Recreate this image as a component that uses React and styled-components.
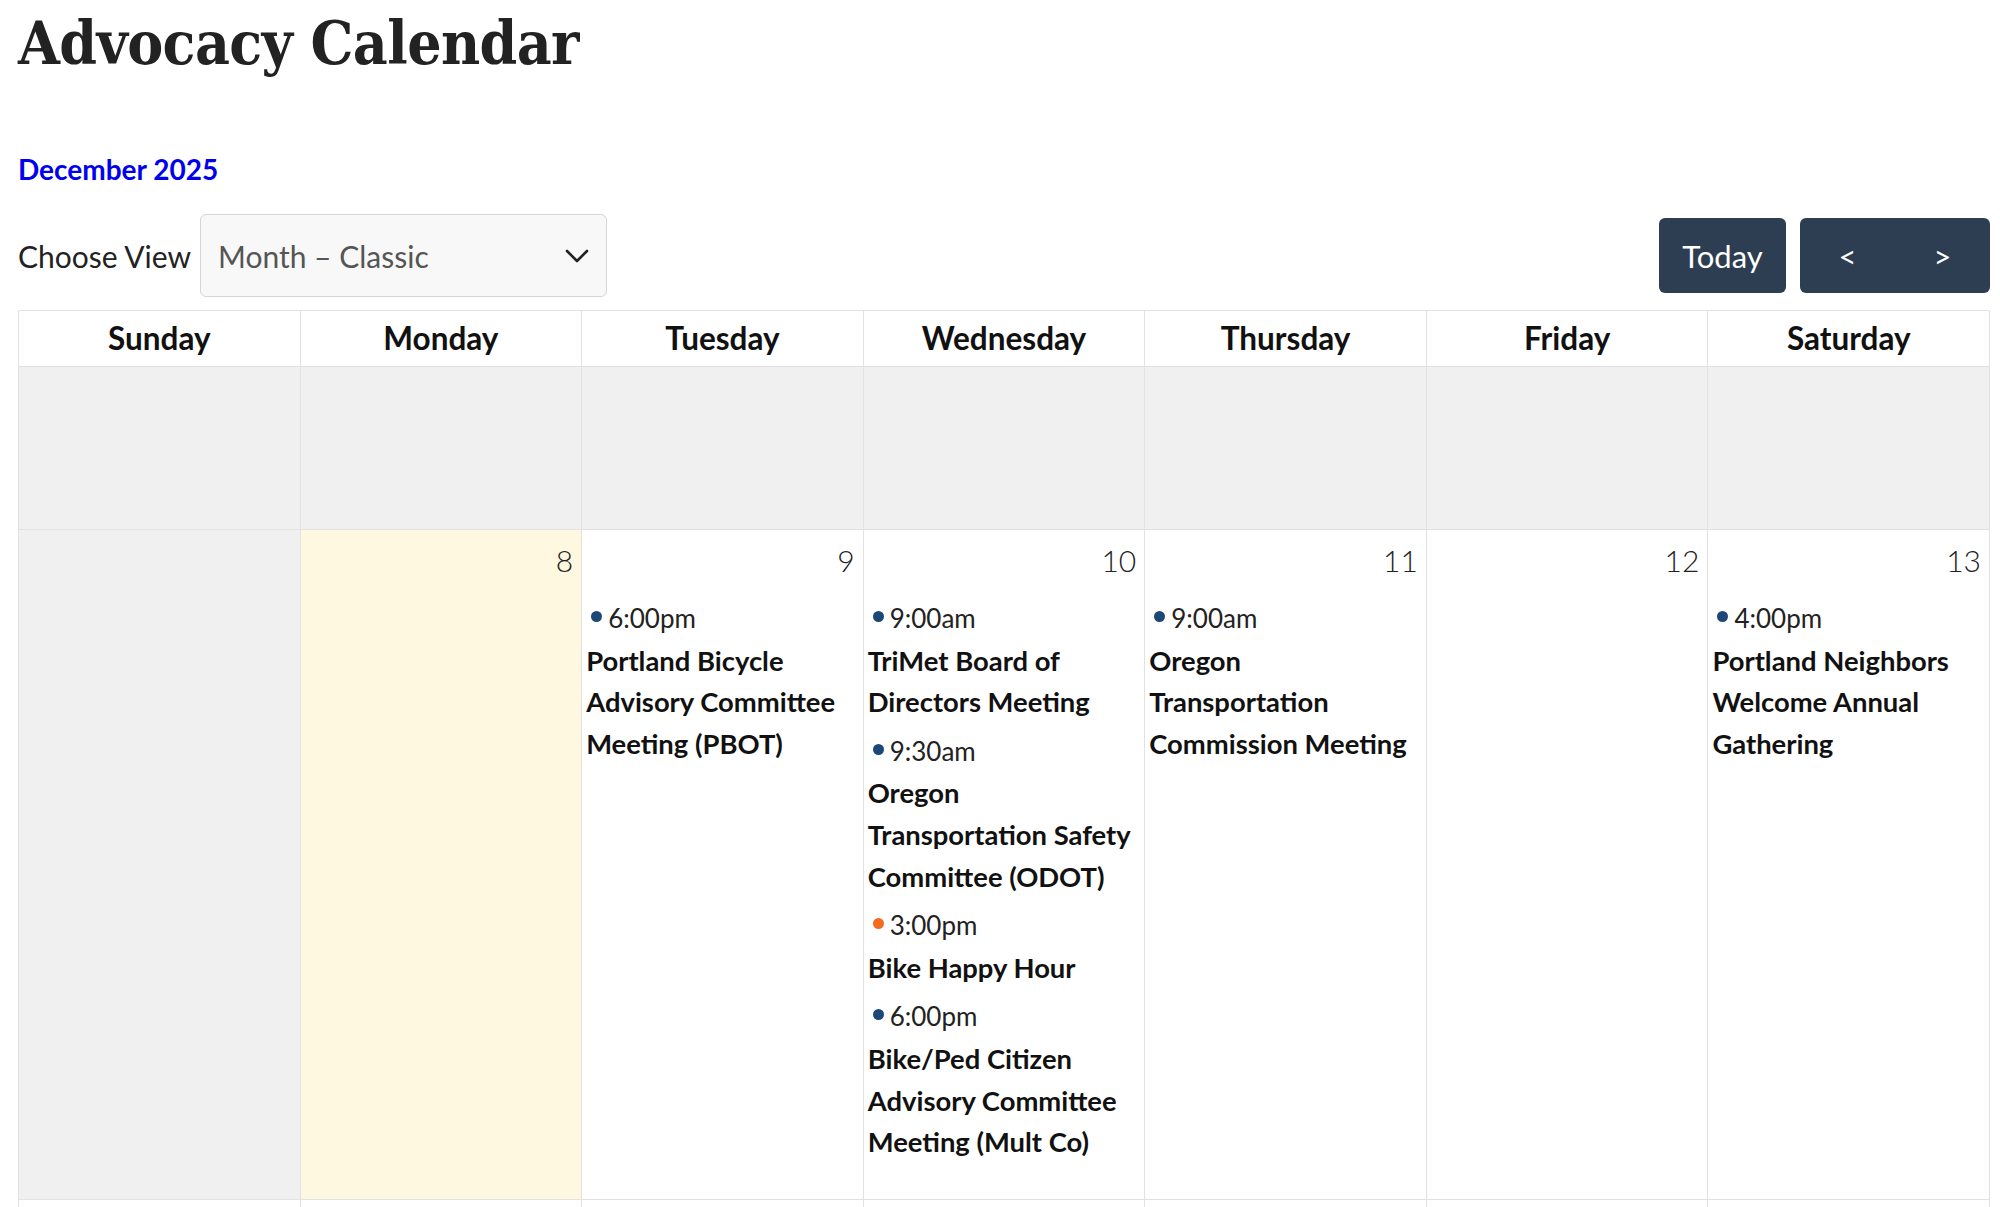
import React from "react";
import styled, { createGlobalStyle } from "styled-components";

const GlobalStyle = createGlobalStyle`
  body {
    margin: 0;
    background: #fff;
    font-family: Lato, "Noto Sans", sans-serif;
    color: #111;
  }
`;

const Page = styled.div`
  padding: 9px 10px 0 18px;
`;

const Title = styled.h1`
  margin: 0;
  font-family: "DejaVu Serif Condensed", "DejaVu Serif", serif;
  font-weight: 700;
  font-size: 60px;
  line-height: 69px;
  color: #222;
  letter-spacing: -0.6px;
`;

const MonthLabel = styled.h2`
  margin: 75px 0 0;
  font-size: 28px;
  line-height: 32px;
  font-weight: 700;
  color: #0000ee;
`;

const Controls = styled.div`
  display: flex;
  align-items: center;
  justify-content: space-between;
  margin: 29px 0 13px;
`;

const ViewPicker = styled.div`
  display: flex;
  align-items: center;
  gap: 9px;
`;

const Label = styled.span`
  font-size: 30px;
  color: #222;
`;

const Select = styled.div`
  width: 407px;
  height: 83px;
  box-sizing: border-box;
  display: flex;
  align-items: center;
  justify-content: space-between;
  padding: 0 17px;
  background: #f8f8f8;
  border: 1px solid #d6d6d6;
  border-radius: 6px;
  font-size: 30px;
  color: #555;
`;

const NavGroup = styled.div`
  display: flex;
  gap: 14px;
`;

const NavButton = styled.button`
  height: 75px;
  width: ${(p) => p.$w}px;
  display: flex;
  align-items: center;
  justify-content: space-around;
  padding: 0;
  border: none;
  border-radius: 6px;
  background: #2e3e52;
  color: #fff;
  font-family: inherit;
  font-size: 31px;
`;

const Grid = styled.div`
  display: grid;
  grid-template-columns: repeat(7, 1fr);
  border-top: 1px solid #e2e2e2;
  border-left: 1px solid #e2e2e2;
`;

const HeadCell = styled.div`
  height: 55px;
  border-right: 1px solid #e2e2e2;
  border-bottom: 1px solid #e2e2e2;
  text-align: center;
  font-size: 31.5px;
  font-weight: 700;
  line-height: 55px;
  color: #111;
`;

const DayCell = styled.div`
  min-height: ${(p) => p.$h}px;
  box-sizing: border-box;
  border-right: 1px solid #e2e2e2;
  border-bottom: 1px solid #e2e2e2;
  padding: 9px 4px 28px 4px;
  background: ${(p) => (p.$today ? "#fef8e0" : p.$muted ? "#f0f0f0" : "#fff")};
`;

const DayNum = styled.div`
  text-align: right;
  padding-right: 4px;
  font-size: 30px;
  font-weight: 300;
  line-height: 42px;
  color: #222;
`;

const EventList = styled.div`
  margin-top: 17px;
  display: flex;
  flex-direction: column;
  gap: 8px;
`;

const Event = styled.div`
  font-size: 26px;
  line-height: 41.6px;
`;

const Time = styled.div`
  display: flex;
  align-items: center;
  padding-left: 5px;
  color: #222;
`;

const Dot = styled.span`
  width: 11px;
  height: 11px;
  border-radius: 50%;
  margin-right: 6px;
  margin-top: -5px;
  background: ${(p) => (p.$orange ? "#f26b1f" : "#1d4777")};
`;

const EventTitle = styled.div`
  font-size: 27.4px;
  font-weight: 700;
  color: #111;
`;

const Chevron = () => (
  <svg width="24" height="16" viewBox="0 0 24 16">
    <path d="M2 3 L12 13 L22 3" fill="none" stroke="#222" strokeWidth="2.6" strokeLinecap="round" strokeLinejoin="round" />
  </svg>
);

const days = ["Sunday", "Monday", "Tuesday", "Wednesday", "Thursday", "Friday", "Saturday"];

const events = {
  9: [{ time: "6:00pm", title: "Portland Bicycle Advisory Committee Meeting (PBOT)" }],
  10: [
    { time: "9:00am", title: "TriMet Board of Directors Meeting" },
    { time: "9:30am", title: "Oregon Transportation Safety Committee (ODOT)" },
    { time: "3:00pm", title: "Bike Happy Hour", orange: true },
    { time: "6:00pm", title: "Bike/Ped Citizen Advisory Committee Meeting (Mult Co)" },
  ],
  11: [{ time: "9:00am", title: "Oregon Transportation Commission Meeting" }],
  13: [{ time: "4:00pm", title: "Portland Neighbors Welcome Annual Gathering" }],
};

const weeks = [
  { h: 163, cells: Array(7).fill({ muted: true }) },
  {
    h: 670,
    cells: [
      { muted: true },
      { n: 8, today: true },
      { n: 9 },
      { n: 10 },
      { n: 11 },
      { n: 12 },
      { n: 13 },
    ],
  },
  { h: 60, cells: Array(7).fill({}) },
];

export default function App() {
  return (
    <Page>
      <GlobalStyle />
      <Title>Advocacy Calendar</Title>
      <MonthLabel>December 2025</MonthLabel>
      <Controls>
        <ViewPicker>
          <Label>Choose View</Label>
          <Select>
            <span>Month – Classic</span>
            <Chevron />
          </Select>
        </ViewPicker>
        <NavGroup>
          <NavButton $w={127}>Today</NavButton>
          <NavButton $w={190}>
            <span>&lt;</span>
            <span>&gt;</span>
          </NavButton>
        </NavGroup>
      </Controls>
      <Grid>
        {days.map((d) => (
          <HeadCell key={d}>{d}</HeadCell>
        ))}
        {weeks.map((w, wi) =>
          w.cells.map((c, ci) => (
            <DayCell key={`${wi}-${ci}`} $h={w.h} $muted={c.muted} $today={c.today}>
              {c.n && <DayNum>{c.n}</DayNum>}
              {c.n && events[c.n] && (
                <EventList>
                  {events[c.n].map((e) => (
                    <Event key={e.time + e.title}>
                      <Time>
                        <Dot $orange={e.orange} />
                        {e.time}
                      </Time>
                      <EventTitle>{e.title}</EventTitle>
                    </Event>
                  ))}
                </EventList>
              )}
            </DayCell>
          ))
        )}
      </Grid>
    </Page>
  );
}
